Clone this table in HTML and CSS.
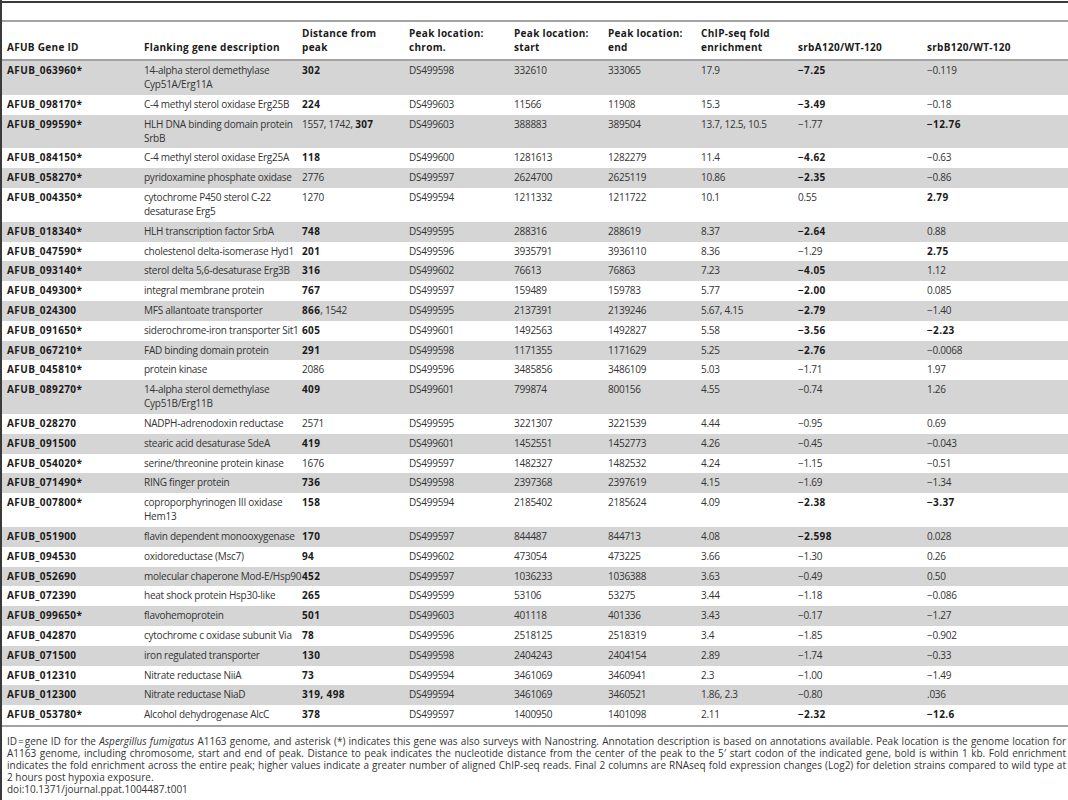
FILE: index.html
```html
<!DOCTYPE html>
<html>

<head>
    <title>Table 1 - SrbA/SrbB ChIP-seq targets</title>
    <link rel="stylesheet" href="styles.css">
</head>

<body>
    <div class="page">
        <div class="top-rule"></div>

        <table class="data-table">
            <colgroup>
                <col style="width: 137px">
                <col style="width: 158px">
                <col style="width: 107px">
                <col style="width: 105px">
                <col style="width: 94px">
                <col style="width: 93px">
                <col style="width: 97px">
                <col style="width: 129px">
                <col style="width: 146px">
            </colgroup>
            <thead>
                <tr>
                    <th>AFUB Gene ID</th>
                    <th>Flanking gene description</th>
                    <th>Distance from<br>peak</th>
                    <th>Peak location:<br>chrom.</th>
                    <th>Peak location:<br>start</th>
                    <th>Peak location:<br>end</th>
                    <th>ChIP-seq fold<br>enrichment</th>
                    <th>srbA120/WT-120</th>
                    <th>srbB120/WT-120</th>
                </tr>
            </thead>
            <tbody>
                <tr>
                    <td class="id">AFUB_063960*</td>
                    <td>14-alpha sterol demethylase<br>Cyp51A/Erg11A</td>
                    <td><b>302</b></td>
                    <td>DS499598</td>
                    <td>332610</td>
                    <td>333065</td>
                    <td>17.9</td>
                    <td><b>&minus;7.25</b></td>
                    <td>&minus;0.119</td>
                </tr>
                <tr>
                    <td class="id">AFUB_098170*</td>
                    <td>C-4 methyl sterol oxidase Erg25B</td>
                    <td><b>224</b></td>
                    <td>DS499603</td>
                    <td>11566</td>
                    <td>11908</td>
                    <td>15.3</td>
                    <td><b>&minus;3.49</b></td>
                    <td>&minus;0.18</td>
                </tr>
                <tr>
                    <td class="id">AFUB_099590*</td>
                    <td>HLH DNA binding domain protein<br>SrbB</td>
                    <td>1557, 1742, <b>307</b></td>
                    <td>DS499603</td>
                    <td>388883</td>
                    <td>389504</td>
                    <td>13.7, 12.5, 10.5</td>
                    <td>&minus;1.77</td>
                    <td><b>&minus;12.76</b></td>
                </tr>
                <tr>
                    <td class="id">AFUB_084150*</td>
                    <td>C-4 methyl sterol oxidase Erg25A</td>
                    <td><b>118</b></td>
                    <td>DS499600</td>
                    <td>1281613</td>
                    <td>1282279</td>
                    <td>11.4</td>
                    <td><b>&minus;4.62</b></td>
                    <td>&minus;0.63</td>
                </tr>
                <tr>
                    <td class="id">AFUB_058270*</td>
                    <td>pyridoxamine phosphate oxidase</td>
                    <td>2776</td>
                    <td>DS499597</td>
                    <td>2624700</td>
                    <td>2625119</td>
                    <td>10.86</td>
                    <td><b>&minus;2.35</b></td>
                    <td>&minus;0.86</td>
                </tr>
                <tr>
                    <td class="id">AFUB_004350*</td>
                    <td>cytochrome P450 sterol C-22<br>desaturase Erg5</td>
                    <td>1270</td>
                    <td>DS499594</td>
                    <td>1211332</td>
                    <td>1211722</td>
                    <td>10.1</td>
                    <td>0.55</td>
                    <td><b>2.79</b></td>
                </tr>
                <tr>
                    <td class="id">AFUB_018340*</td>
                    <td>HLH transcription factor SrbA</td>
                    <td><b>748</b></td>
                    <td>DS499595</td>
                    <td>288316</td>
                    <td>288619</td>
                    <td>8.37</td>
                    <td><b>&minus;2.64</b></td>
                    <td>0.88</td>
                </tr>
                <tr>
                    <td class="id">AFUB_047590*</td>
                    <td>cholestenol delta-isomerase Hyd1</td>
                    <td><b>201</b></td>
                    <td>DS499596</td>
                    <td>3935791</td>
                    <td>3936110</td>
                    <td>8.36</td>
                    <td>&minus;1.29</td>
                    <td><b>2.75</b></td>
                </tr>
                <tr>
                    <td class="id">AFUB_093140*</td>
                    <td>sterol delta 5,6-desaturase Erg3B</td>
                    <td><b>316</b></td>
                    <td>DS499602</td>
                    <td>76613</td>
                    <td>76863</td>
                    <td>7.23</td>
                    <td><b>&minus;4.05</b></td>
                    <td>1.12</td>
                </tr>
                <tr>
                    <td class="id">AFUB_049300*</td>
                    <td>integral membrane protein</td>
                    <td><b>767</b></td>
                    <td>DS499597</td>
                    <td>159489</td>
                    <td>159783</td>
                    <td>5.77</td>
                    <td><b>&minus;2.00</b></td>
                    <td>0.085</td>
                </tr>
                <tr>
                    <td class="id">AFUB_024300</td>
                    <td>MFS allantoate transporter</td>
                    <td><b>866</b>, 1542</td>
                    <td>DS499595</td>
                    <td>2137391</td>
                    <td>2139246</td>
                    <td>5.67, 4.15</td>
                    <td><b>&minus;2.79</b></td>
                    <td>&minus;1.40</td>
                </tr>
                <tr>
                    <td class="id">AFUB_091650*</td>
                    <td>siderochrome-iron transporter Sit1</td>
                    <td><b>605</b></td>
                    <td>DS499601</td>
                    <td>1492563</td>
                    <td>1492827</td>
                    <td>5.58</td>
                    <td><b>&minus;3.56</b></td>
                    <td><b>&minus;2.23</b></td>
                </tr>
                <tr>
                    <td class="id">AFUB_067210*</td>
                    <td>FAD binding domain protein</td>
                    <td><b>291</b></td>
                    <td>DS499598</td>
                    <td>1171355</td>
                    <td>1171629</td>
                    <td>5.25</td>
                    <td><b>&minus;2.76</b></td>
                    <td>&minus;0.0068</td>
                </tr>
                <tr>
                    <td class="id">AFUB_045810*</td>
                    <td>protein kinase</td>
                    <td>2086</td>
                    <td>DS499596</td>
                    <td>3485856</td>
                    <td>3486109</td>
                    <td>5.03</td>
                    <td>&minus;1.71</td>
                    <td>1.97</td>
                </tr>
                <tr>
                    <td class="id">AFUB_089270*</td>
                    <td>14-alpha sterol demethylase<br>Cyp51B/Erg11B</td>
                    <td><b>409</b></td>
                    <td>DS499601</td>
                    <td>799874</td>
                    <td>800156</td>
                    <td>4.55</td>
                    <td>&minus;0.74</td>
                    <td>1.26</td>
                </tr>
                <tr>
                    <td class="id">AFUB_028270</td>
                    <td>NADPH-adrenodoxin reductase</td>
                    <td>2571</td>
                    <td>DS499595</td>
                    <td>3221307</td>
                    <td>3221539</td>
                    <td>4.44</td>
                    <td>&minus;0.95</td>
                    <td>0.69</td>
                </tr>
                <tr>
                    <td class="id">AFUB_091500</td>
                    <td>stearic acid desaturase SdeA</td>
                    <td><b>419</b></td>
                    <td>DS499601</td>
                    <td>1452551</td>
                    <td>1452773</td>
                    <td>4.26</td>
                    <td>&minus;0.45</td>
                    <td>&minus;0.043</td>
                </tr>
                <tr>
                    <td class="id">AFUB_054020*</td>
                    <td>serine/threonine protein kinase</td>
                    <td>1676</td>
                    <td>DS499597</td>
                    <td>1482327</td>
                    <td>1482532</td>
                    <td>4.24</td>
                    <td>&minus;1.15</td>
                    <td>&minus;0.51</td>
                </tr>
                <tr>
                    <td class="id">AFUB_071490*</td>
                    <td>RING finger protein</td>
                    <td><b>736</b></td>
                    <td>DS499598</td>
                    <td>2397368</td>
                    <td>2397619</td>
                    <td>4.15</td>
                    <td>&minus;1.69</td>
                    <td>&minus;1.34</td>
                </tr>
                <tr>
                    <td class="id">AFUB_007800*</td>
                    <td>coproporphyrinogen III oxidase<br>Hem13</td>
                    <td><b>158</b></td>
                    <td>DS499594</td>
                    <td>2185402</td>
                    <td>2185624</td>
                    <td>4.09</td>
                    <td><b>&minus;2.38</b></td>
                    <td><b>&minus;3.37</b></td>
                </tr>
                <tr>
                    <td class="id">AFUB_051900</td>
                    <td>flavin dependent monooxygenase</td>
                    <td><b>170</b></td>
                    <td>DS499597</td>
                    <td>844487</td>
                    <td>844713</td>
                    <td>4.08</td>
                    <td><b>&minus;2.598</b></td>
                    <td>0.028</td>
                </tr>
                <tr>
                    <td class="id">AFUB_094530</td>
                    <td>oxidoreductase (Msc7)</td>
                    <td><b>94</b></td>
                    <td>DS499602</td>
                    <td>473054</td>
                    <td>473225</td>
                    <td>3.66</td>
                    <td>&minus;1.30</td>
                    <td>0.26</td>
                </tr>
                <tr>
                    <td class="id">AFUB_052690</td>
                    <td>molecular chaperone Mod-E/Hsp90</td>
                    <td><b>452</b></td>
                    <td>DS499597</td>
                    <td>1036233</td>
                    <td>1036388</td>
                    <td>3.63</td>
                    <td>&minus;0.49</td>
                    <td>0.50</td>
                </tr>
                <tr>
                    <td class="id">AFUB_072390</td>
                    <td>heat shock protein Hsp30-like</td>
                    <td><b>265</b></td>
                    <td>DS499599</td>
                    <td>53106</td>
                    <td>53275</td>
                    <td>3.44</td>
                    <td>&minus;1.18</td>
                    <td>&minus;0.086</td>
                </tr>
                <tr>
                    <td class="id">AFUB_099650*</td>
                    <td>flavohemoprotein</td>
                    <td><b>501</b></td>
                    <td>DS499603</td>
                    <td>401118</td>
                    <td>401336</td>
                    <td>3.43</td>
                    <td>&minus;0.17</td>
                    <td>&minus;1.27</td>
                </tr>
                <tr>
                    <td class="id">AFUB_042870</td>
                    <td>cytochrome c oxidase subunit Via</td>
                    <td><b>78</b></td>
                    <td>DS499596</td>
                    <td>2518125</td>
                    <td>2518319</td>
                    <td>3.4</td>
                    <td>&minus;1.85</td>
                    <td>&minus;0.902</td>
                </tr>
                <tr>
                    <td class="id">AFUB_071500</td>
                    <td>iron regulated transporter</td>
                    <td><b>130</b></td>
                    <td>DS499598</td>
                    <td>2404243</td>
                    <td>2404154</td>
                    <td>2.89</td>
                    <td>&minus;1.74</td>
                    <td>&minus;0.33</td>
                </tr>
                <tr>
                    <td class="id">AFUB_012310</td>
                    <td>Nitrate reductase NiiA</td>
                    <td><b>73</b></td>
                    <td>DS499594</td>
                    <td>3461069</td>
                    <td>3460941</td>
                    <td>2.3</td>
                    <td>&minus;1.00</td>
                    <td>&minus;1.49</td>
                </tr>
                <tr>
                    <td class="id">AFUB_012300</td>
                    <td>Nitrate reductase NiaD</td>
                    <td><b>319, 498</b></td>
                    <td>DS499594</td>
                    <td>3461069</td>
                    <td>3460521</td>
                    <td>1.86, 2.3</td>
                    <td>&minus;0.80</td>
                    <td>.036</td>
                </tr>
                <tr>
                    <td class="id">AFUB_053780*</td>
                    <td>Alcohol dehydrogenase AlcC</td>
                    <td><b>378</b></td>
                    <td>DS499597</td>
                    <td>1400950</td>
                    <td>1401098</td>
                    <td>2.11</td>
                    <td><b>&minus;2.32</b></td>
                    <td><b>&minus;12.6</b></td>
                </tr>
            </tbody>
        </table>

        <!-- Table footnote, one block per printed line -->
        <div class="table-note">
            <span class="note-line">ID&#8202;=&#8202;gene ID for the <i>Aspergillus fumigatus</i> A1163 genome, and asterisk (*) indicates this gene was also surveys with Nanostring. Annotation description is based on annotations available. Peak location is the genome location for</span>
            <span class="note-line">A1163 genome, including chromosome, start and end of peak. Distance to peak indicates the nucleotide distance from the center of the peak to the 5&prime; start codon of the indicated gene, bold is within 1 kb. Fold enrichment</span>
            <span class="note-line">indicates the fold enrichment across the entire peak; higher values indicate a greater number of aligned ChIP-seq reads. Final 2 columns are RNAseq fold expression changes (Log2) for deletion strains compared to wild type at</span>
            <span class="note-line last">2 hours post hypoxia exposure.</span>
            <span class="note-line last">doi:10.1371/journal.ppat.1004487.t001</span>
        </div>
    </div>
</body>

</html>
```

FILE: styles.css
```css
/* Page frame */
body {
    margin: 0;
    font-family: "Open Sans", "Liberation Sans", sans-serif;
    font-size: 10px;
    color: #333;
    background: #fff;
}

.page {
    border-left: 2px solid #3a3a3a;
    min-height: 800px;
    box-sizing: border-box;
    overflow: hidden;
}

/* Dark rule above the table */
.top-rule {
    margin-top: 1px;
    border-top: 2px solid #3a3a3a;
    height: 17px;
}

/* Data table */
.data-table {
    width: 1066px;
    table-layout: fixed;
    border-collapse: separate;
    border-spacing: 0;
    border-top: 2px solid #a3a3a3;
    border-bottom: 2px solid #a3a3a3;
    line-height: 14px;
    letter-spacing: -0.25px;
}

.data-table th {
    height: 39px;
    padding: 0 5px 4.75px;
    text-align: left;
    vertical-align: bottom;
    font-weight: bold;
    letter-spacing: 0.3px;
    color: #1a1a1a;
    border-bottom: 2px solid #a3a3a3;
    box-sizing: border-box;
}

.data-table td {
    padding: 2px 5px 3.8px;
    vertical-align: top;
    white-space: nowrap;
}

.data-table tbody tr:nth-child(odd) {
    background: #d5d5d5;
}

.data-table td.id,
.data-table b {
    font-weight: bold;
    letter-spacing: 0.4px;
    color: #1a1a1a;
}

/* Footnote under the table */
.table-note {
    padding: 8.2px 2px 0 5px;
    line-height: 12px;
}

.note-line {
    display: block;
    text-align: justify;
    text-align-last: justify;
}

.note-line.last {
    text-align-last: left;
}
```
